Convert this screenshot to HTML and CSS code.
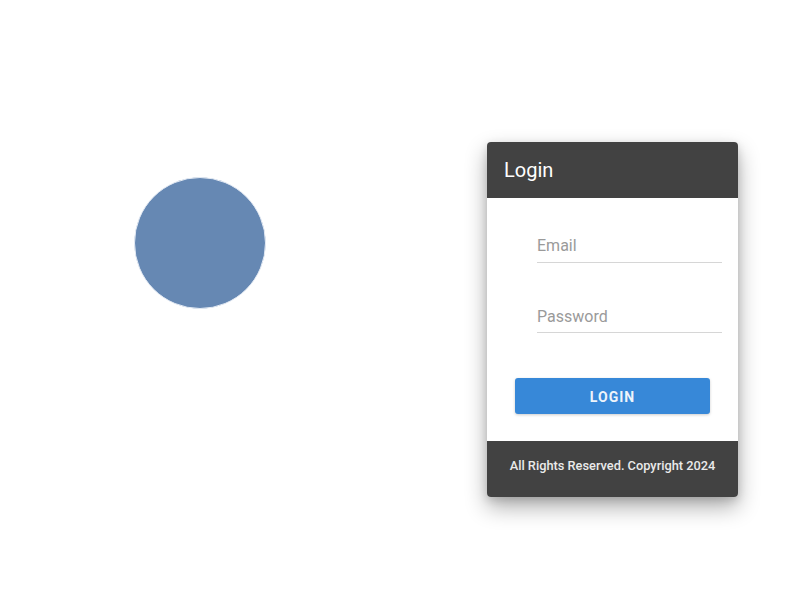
FILE: index.html
```html
<!DOCTYPE html>
<html>
<head>
<meta charset="utf-8">
<link rel="stylesheet" href="styles.css">
</head>
<body>
<main class="page">
  <div class="circle"></div>
  <section class="card">
    <header class="card-header">Login</header>
    <div class="card-body">
      <div class="field"><span class="placeholder">Email</span></div>
      <div class="field"><span class="placeholder">Password</span></div>
      <button class="btn">LOGIN</button>
    </div>
    <footer class="card-footer">All Rights Reserved. Copyright 2024</footer>
  </section>
</main>
</body>
</html>
```
FILE: styles.css
```css
html, body {
  margin: 0;
  padding: 0;
  background: #ffffff;
  font-family: Roboto, "Liberation Sans", sans-serif;
}
body {
  min-height: 600px;
}
.page {
  display: flex;
  align-items: flex-start;
  padding: 142px 0 60px 134px;
  gap: 221px;
}
.circle {
  width: 130px;
  height: 130px;
  margin-top: 35px;
  border-radius: 50%;
  background: #6688b3;
  border: 1px solid #e3eaf4;
  flex: none;
}
.card {
  width: 251px;
  border-radius: 4px;
  overflow: hidden;
  background: #fff;
  box-shadow: 0 10px 22px rgba(0,0,0,0.32), 0 3px 8px rgba(0,0,0,0.14);
  flex: none;
}
.card-header {
  height: 56px;
  background: #424242;
  color: #fff;
  font-size: 20px;
  display: flex;
  align-items: center;
  padding-left: 17px;
}
.card-body {
  padding: 38px 0 27px 0;
  display: flex;
  flex-direction: column;
}
.field {
  width: 185px;
  margin-left: 50px;
  height: 20px;
  padding-bottom: 6px;
  border-bottom: 1px solid #d6d6d6;
  font-size: 16px;
  line-height: 20px;
  color: #9a9a9a;
}
.field + .field {
  margin-top: 44px;
  padding-bottom: 5px;
  height: 20px;
}
.btn {
  margin: 45px 0 0 28px;
  width: 195px;
  height: 36px;
  border: none;
  border-radius: 3px;
  background: #3788d8;
  color: #eef4fb;
  font-family: Roboto, "Liberation Sans", sans-serif;
  font-weight: 700;
  font-size: 14px;
  letter-spacing: 1px;
  padding: 2px 0 0 0;
  box-shadow: 0 1px 3px rgba(0,0,0,0.2);
}
.card-footer {
  height: 56px;
  box-sizing: border-box;
  padding-bottom: 7px;
  background: #424242;
  color: #eaeaea;
  font-size: 12.8px;
  font-weight: 500;
  display: flex;
  align-items: center;
  justify-content: center;
}
```
